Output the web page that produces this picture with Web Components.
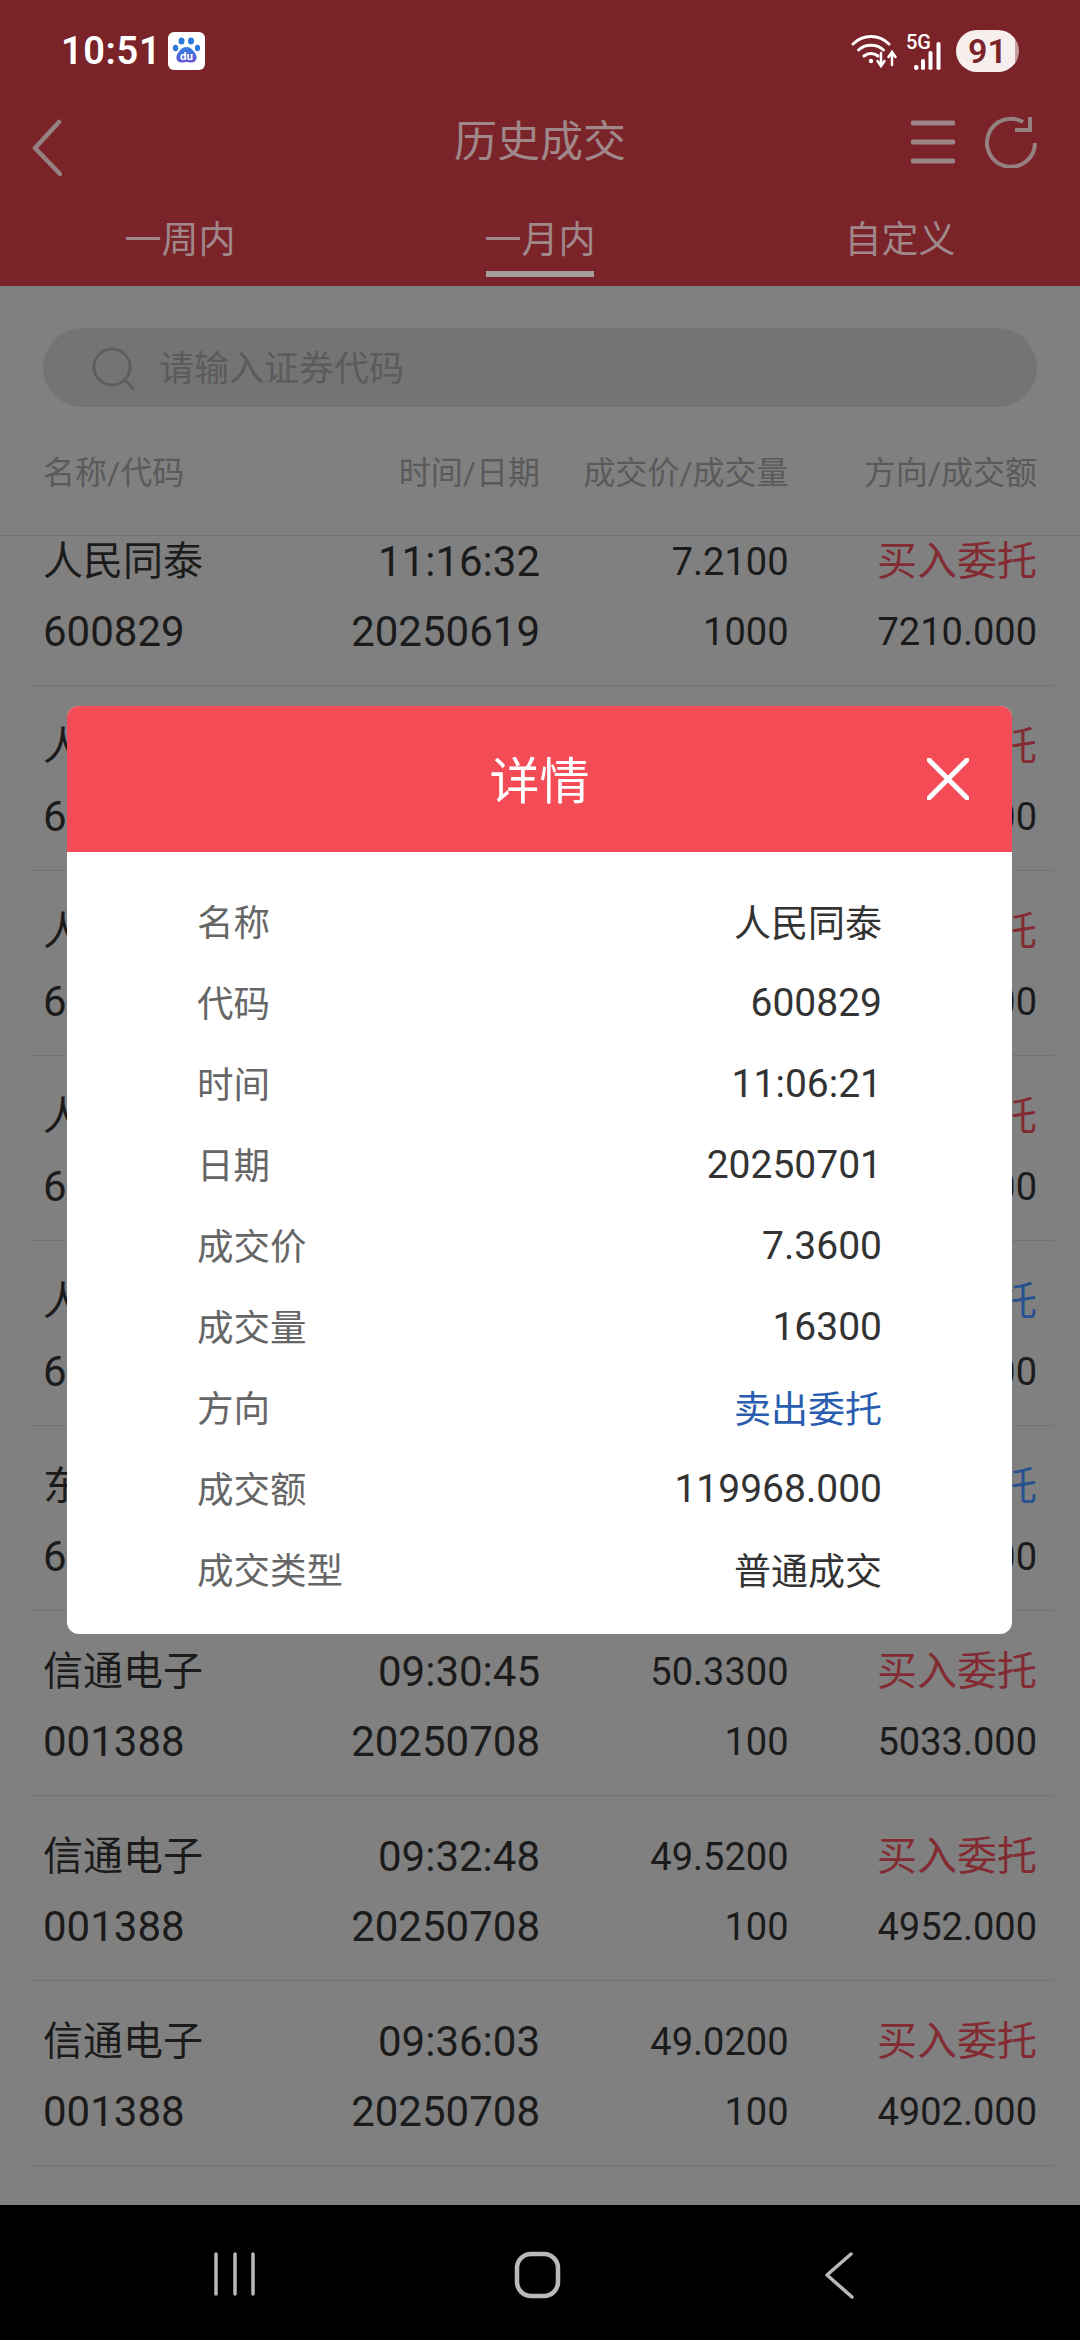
<!DOCTYPE html>
<html lang="zh-CN"><head><meta charset="utf-8"><title>历史成交</title>
<style>
html,body{margin:0;padding:0;background:#808080}
body{width:1080px;height:2340px;overflow:hidden;position:relative;font-family:Roboto,"Noto Sans CJK SC",sans-serif;display:flex;flex-direction:column}
</style></head><body>
<app-header title-text="历史成交">
  <tab-item>一周内</tab-item><tab-item active>一月内</tab-item><tab-item>自定义</tab-item>
</app-header>
<search-box placeholder="请输入证券代码"></search-box>
<table-head><span>名称/代码</span><span>时间/日期</span><span>成交价/成交量</span><span>方向/成交额</span></table-head>
<trade-list>
  <trade-row side="buy"><span>人民同泰</span><span>11:16:32</span><span>7.2100</span><span>买入委托</span><span>600829</span><span>20250619</span><span>1000</span><span>7210.000</span></trade-row>
  <trade-row side="buy"><span>人民同泰</span><span></span><span></span><span>买入委托</span><span>600829</span><span></span><span></span><span>000</span></trade-row>
  <trade-row side="buy"><span>人民同泰</span><span></span><span></span><span>买入委托</span><span>600829</span><span></span><span></span><span>000</span></trade-row>
  <trade-row side="buy"><span>人民同泰</span><span></span><span></span><span>买入委托</span><span>600829</span><span></span><span></span><span>000</span></trade-row>
  <trade-row side="sell"><span>人民同泰</span><span></span><span></span><span>卖出委托</span><span>600829</span><span></span><span></span><span>000</span></trade-row>
  <trade-row side="sell"><span>东</span><span></span><span></span><span>卖出委托</span><span>6</span><span></span><span></span><span>000</span></trade-row>
  <trade-row side="buy"><span>信通电子</span><span>09:30:45</span><span>50.3300</span><span>买入委托</span><span>001388</span><span>20250708</span><span>100</span><span>5033.000</span></trade-row>
  <trade-row side="buy"><span>信通电子</span><span>09:32:48</span><span>49.5200</span><span>买入委托</span><span>001388</span><span>20250708</span><span>100</span><span>4952.000</span></trade-row>
  <trade-row side="buy"><span>信通电子</span><span>09:36:03</span><span>49.0200</span><span>买入委托</span><span>001388</span><span>20250708</span><span>100</span><span>4902.000</span></trade-row>
</trade-list>
<nav-bar></nav-bar>
<detail-modal title-text="详情">
  <detail-row cjk label="名称">人民同泰</detail-row>
  <detail-row label="代码">600829</detail-row>
  <detail-row label="时间">11:06:21</detail-row>
  <detail-row label="日期">20250701</detail-row>
  <detail-row label="成交价">7.3600</detail-row>
  <detail-row label="成交量">16300</detail-row>
  <detail-row cjk label="方向" tone="sell">卖出委托</detail-row>
  <detail-row label="成交额">119968.000</detail-row>
  <detail-row cjk label="成交类型">普通成交</detail-row>
</detail-modal>
<script>
function def(name,html){
  customElements.define(name,class extends HTMLElement{
    connectedCallback(){
      if(this.shadowRoot)return;
      const r=this.attachShadow({mode:'open'});
      r.innerHTML=typeof html==='function'?html(this):html;
    }
  });
}
def('status-bar',`<style>
:host{display:flex;align-items:center;height:96px;box-sizing:border-box;padding:6px 0 0 61px;color:#fff;position:relative}
.t{font:600 38px/1 Roboto,sans-serif;letter-spacing:.6px;width:92px;white-space:nowrap}
.logo{margin-left:15px;display:block}
.right{margin-left:auto;display:flex;align-items:center;margin-right:61px}
.g{font:500 20px/1 Roboto,sans-serif;position:absolute;left:906px;top:32px;color:#fff}
.bat{width:63px;height:42px;border-radius:21px;background:linear-gradient(90deg,#f7efee 93%,#c79c9e 93%);color:#7a2429;font:600 34px/42px Roboto,sans-serif;text-align:center;margin-left:12px}
</style>
<span class="t">10:51</span>
<svg class="logo" width="37" height="38" viewBox="0 0 37 38"><defs><linearGradient id="b" x1="0" y1="0" x2="0" y2="1"><stop offset="0" stop-color="#2b7fe0"/><stop offset="1" stop-color="#6a54d6"/></linearGradient></defs>
<rect width="37" height="38" rx="6" fill="#fff"/>
<g fill="#2b7bdc"><ellipse cx="13.500" cy="9" rx="3" ry="3.600"/><ellipse cx="23" cy="9" rx="3" ry="3.600"/><ellipse cx="7.500" cy="16" rx="2.600" ry="3.200"/><ellipse cx="29.500" cy="16" rx="2.600" ry="3.200"/></g>
<path d="M18.500 15c4.500 0 6.500 3.500 8.500 6 2.500 3 2.500 9-3 9.500-2.500.3-3.500-.5-5.500-.5s-3 .8-5.500.5c-5.500-.5-5.500-6.500-3-9.500 2-2.500 4-6 8.500-6z" fill="url(#b)"/>
<text x="18.500" y="28" text-anchor="middle" fill="#fff" font-family="Roboto,sans-serif" font-size="11.500" font-weight="700">du</text></svg>
<div class="right">
<svg width="47" height="36" viewBox="0 0 47 36" fill="none" stroke="#fff" stroke-width="3" stroke-linecap="round"><path d="M2 11C12 1 28 1 38 11"/><path d="M7.500 17C14 10.500 26 10.500 32.500 17"/><path d="M13 23c4-3.500 10-3.500 14 0"/><circle cx="20" cy="28" r="2.200" fill="#fff" stroke="none"/><path d="M30 20v12M26.500 28l3.500 5 3.500-5M41 32V20M37.500 24l3.500-5 3.500 5" stroke-width="2.500"/></svg>
<svg width="32" height="30" viewBox="0 0 32 30" fill="#fff" style="margin-left:14px;align-self:flex-end"><rect x="2" y="23" width="4.500" height="5" rx="2"/><rect x="9" y="17" width="4" height="11" rx="1.800"/><rect x="16.500" y="9" width="4" height="19" rx="1.800"/><rect x="24.500" y="0" width="4" height="28" rx="1.800"/></svg>
<span class="g">5G</span>
<span class="bat">91</span></div>`);

def('app-header',h=>`<style>
:host{display:block;height:286px;background:#7a2429;flex:none;color:#a08789}
.bar{display:grid;grid-template-columns:1fr auto 1fr;align-items:center;height:92px}
.title{font-size:43px;line-height:60px;color:#a08789}
.back{margin:12px 0 0 32px;display:block}
.acts{justify-self:end;display:flex;align-items:center;gap:30px;margin-right:43px}
.tabs{display:grid;grid-template-columns:1fr 1fr 1fr;height:98px}
svg{display:block}
</style>
<status-bar></status-bar>
<div class="bar">
<svg class="back" width="30" height="58" viewBox="0 0 30 58" fill="none" stroke="#958082" stroke-width="4.500" stroke-linecap="round" stroke-linejoin="round"><path d="M27 3 3 29l25 26"/></svg>
<span class="title">${h.getAttribute('title-text')}</span>
<div class="acts">
<svg width="44" height="44" viewBox="0 0 44 44" stroke="#9c8386" stroke-width="5" stroke-linecap="round"><path d="M2 3h40M2 22h40M2 41h40"/></svg>
<svg width="52" height="52" viewBox="0 0 52 52" fill="none" stroke="#958082" stroke-width="4"><path d="M50 27A24 24 0 1 1 38 6"/><path d="M30 14h15V1"/></svg>
</div></div>
<div class="tabs"><slot></slot></div>`);

def('tab-item',h=>`<style>
:host{display:flex;justify-content:center;padding-top:27px;box-sizing:border-box}
.w{display:inline-flex;flex-direction:column;align-items:center}
.l{font-size:37px;line-height:52px;color:#a08789;white-space:nowrap}
.u{width:108px;height:6px;margin-top:4px;background:${h.hasAttribute('active')?'#a79c9c':'transparent'}}
</style><span class="w"><span class="l"><slot></slot></span><span class="u"></span></span>`);

def('search-box',h=>`<style>
:host{flex:none;margin:42px 43px 0 43px;height:79px;border-radius:40px;background:#747474;box-sizing:border-box;padding-left:49px;display:flex;align-items:center}
svg{display:block;flex:none;margin-top:3px}
span{margin-left:24px;font-size:35px;color:#5b5b5b;line-height:79px;padding-top:3px;white-space:nowrap}
</style><svg width="43" height="44" viewBox="0 0 43 44" fill="none" stroke="#5e5e5e" stroke-width="3" stroke-linecap="round"><circle cx="20" cy="20" r="18"/><path d="M34 34l7 8"/></svg><span>${h.getAttribute('placeholder')}</span>`);

def('table-head',`<style>
:host{display:grid;flex:none;grid-template-columns:repeat(4,1fr);height:129px;box-sizing:border-box;padding:0 43px;border-bottom:1px solid #747474;align-items:center}
::slotted(*){font-size:32px;color:#5a5a5a;text-align:right;white-space:nowrap;line-height:44px;margin-top:4px}
::slotted(:first-child){text-align:left}
</style><slot></slot>`);

def('trade-list',`<style>
:host{display:block;flex:1;min-height:0;overflow:hidden}
.in{margin-top:-35px}
</style><div class="in"><slot></slot></div>`);

def('trade-row',h=>`<style>
:host{display:grid;grid-template-columns:repeat(4,248.5px);height:185px;box-sizing:border-box;margin:0 25px 0 32px;padding:26px 18px 0 11px;border-bottom:1px solid #747474;grid-auto-rows:70px;align-items:center}
::slotted(*){font-size:42px;line-height:50px;color:#1b1b1b;text-align:right;white-space:nowrap}
::slotted(:nth-child(4n+1)){text-align:left}
::slotted(:nth-child(1)),::slotted(:nth-child(4)){font-size:40px}
::slotted(:nth-child(3)),::slotted(:nth-child(7)),::slotted(:nth-child(8)){font-size:38px}
::slotted(:nth-child(4)){color:${h.getAttribute('side')==='sell'?'#27528f':'#832b33'}}
</style><slot></slot>`);

def('detail-modal',h=>`<style>
:host{position:absolute;left:67px;top:706px;width:945px;height:928px;border-radius:12px;overflow:hidden;background:#fff;display:flex;flex-direction:column}
.head{flex:none;height:146px;background:#f34c57;display:flex;align-items:center;justify-content:center;color:#fff;font-size:50px;position:relative}
.head span{margin-top:-4px}
.x{position:absolute;right:43px;top:52px}
.body{padding:28px 130px 0}
</style><div class="head"><span>${h.getAttribute('title-text')}</span>
<svg class="x" width="42" height="42" viewBox="0 0 42 42" stroke="#fff" stroke-width="5" stroke-linecap="round"><path d="M2 2l38 38M40 2 2 40"/></svg></div>
<div class="body"><slot></slot></div>`);

def('detail-row',h=>`<style>
:host{display:flex;justify-content:space-between;align-items:center;height:81px;white-space:nowrap}
.l{color:#666;font-size:36.500px}
.v{color:${h.getAttribute('tone')==='sell'?'#2a5db0':'#333'};font-size:${h.hasAttribute('cjk')?'37px':'39px'};${h.hasAttribute('cjk')?'':'margin-top:3px'}}
</style><span class="l">${h.getAttribute('label')}</span><span class="v"><slot></slot></span>`);

def('nav-bar',`<style>
:host{display:flex;flex:none;height:135px;background:#000;align-items:center;position:relative}
svg{position:absolute;top:46px}
</style>
<svg style="left:212px" width="46" height="46" viewBox="0 0 46 46" stroke="#b9b9b9" stroke-width="3.500" stroke-linecap="round"><path d="M4 3v40M23 3v40M41 3v40"/></svg>
<svg style="left:513px" width="49" height="49" viewBox="0 0 49 49" fill="none" stroke="#b9b9b9" stroke-width="4.500"><rect x="4" y="3" width="41" height="42" rx="14"/></svg>
<svg style="left:824px" width="32" height="48" viewBox="0 0 32 48" fill="none" stroke="#b9b9b9" stroke-width="3.500" stroke-linecap="round" stroke-linejoin="round"><path d="M27 3 3 24l25 22"/></svg>`);
</script>
</body></html>
